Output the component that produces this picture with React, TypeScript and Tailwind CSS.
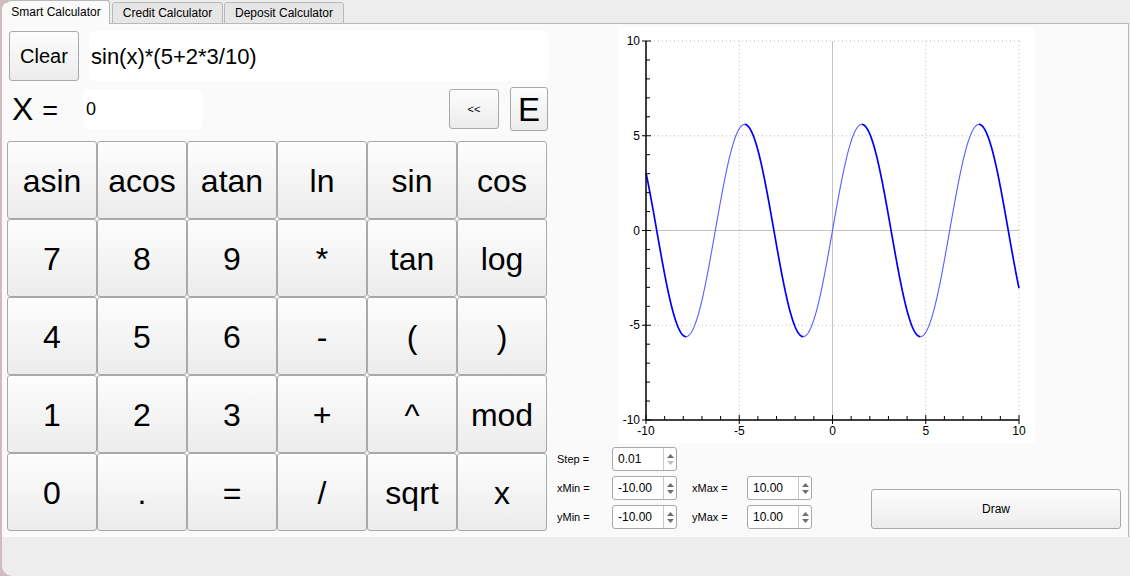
import React from "react";

const FONT = { fontFamily: '"Liberation Sans", Arial, sans-serif' };

const rows = [
  ["asin", "acos", "atan", "ln", "sin", "cos"],
  ["7", "8", "9", "*", "tan", "log"],
  ["4", "5", "6", "-", "(", ")"],
  ["1", "2", "3", "+", "^", "mod"],
  ["0", ".", "=", "/", "sqrt", "x"],
];

function Spin({ value, disabledDown }: { value: string; disabledDown?: boolean }) {
  return (
    <div className="flex h-[24px] w-[65px] rounded-[3px] border border-[#a8a8a8] bg-white">
      <div className="flex flex-1 items-center pl-[5px] text-[12px] text-black">{value}</div>
      <div className="flex w-[13px] flex-col items-center justify-center gap-[3px] border-l border-[#c8c8c8]">
        <svg width="7" height="4" viewBox="0 0 7 4">
          <polygon points="0,4 3.5,0 7,4" fill="#6e6e6e" />
        </svg>
        <svg width="7" height="4" viewBox="0 0 7 4">
          <polygon points="0,0 3.5,4 7,0" fill={disabledDown ? "#bdbdbd" : "#6e6e6e"} />
        </svg>
      </div>
    </div>
  );
}

function Plot() {
  const W = 417;
  const H = 416;
  const L = 28;
  const R = 401;
  const T = 14;
  const B = 393;
  const px = (x: number) => L + ((x + 10) * (R - L)) / 20;
  const py = (y: number) => T + ((10 - y) * (B - T)) / 20;
  const pts: [number, number][] = [];
  for (let i = 0; i <= 2000; i++) {
    const x = -10 + (i * 20) / 2000;
    pts.push([x, 5.6 * Math.sin(x)]);
  }
  const down: string[] = [];
  const up: string[] = [];
  let cur: string[] = [];
  let curDown: boolean | null = null;
  for (let i = 1; i < pts.length; i++) {
    const d = pts[i][1] < pts[i - 1][1];
    if (curDown === null || d !== curDown) {
      if (cur.length) (curDown ? down : up).push(cur.join(" "));
      cur = [`${px(pts[i - 1][0]).toFixed(2)},${py(pts[i - 1][1]).toFixed(2)}`];
      curDown = d;
    }
    cur.push(`${px(pts[i][0]).toFixed(2)},${py(pts[i][1]).toFixed(2)}`);
  }
  if (cur.length) (curDown ? down : up).push(cur.join(" "));

  const minor: number[] = [];
  for (let v = -10; v <= 10; v++) if (v % 5 !== 0) minor.push(v);
  const major = [-10, -5, 0, 5, 10];

  return (
    <svg width={W} height={H} viewBox={`0 0 ${W} ${H}`} className="block bg-white">
      {[-5, 5, 10].map((v) => (
        <line key={"gx" + v} x1={px(v)} y1={T} x2={px(v)} y2={B} stroke="#bdbdbd" strokeWidth="1" strokeDasharray="1 3" />
      ))}
      {[-5, 5, 10].map((v) => (
        <line key={"gy" + v} x1={L} y1={py(v)} x2={R} y2={py(v)} stroke="#bdbdbd" strokeWidth="1" strokeDasharray="1 3" />
      ))}
      <line x1={px(0)} y1={T} x2={px(0)} y2={B} stroke="#c4c4c4" strokeWidth="1" />
      <line x1={L} y1={py(0)} x2={R} y2={py(0)} stroke="#c4c4c4" strokeWidth="1" />
      {up.map((p, i) => (
        <polyline key={"u" + i} points={p} fill="none" stroke="#5c5cff" strokeWidth="1.1" />
      ))}
      {down.map((p, i) => (
        <polyline key={"d" + i} points={p} fill="none" stroke="#0000ff" strokeWidth="1.7" />
      ))}
      <line x1={L} y1={T} x2={L} y2={B + 0.5} stroke="#000" strokeWidth="1.5" />
      <line x1={L} y1={B} x2={R} y2={B} stroke="#000" strokeWidth="1.5" />
      {minor.map((v) => (
        <g key={"m" + v}>
          <line x1={L} y1={py(v)} x2={L + 4} y2={py(v)} stroke="#000" strokeWidth="1" />
          <line x1={px(v)} y1={B} x2={px(v)} y2={B - 4} stroke="#000" strokeWidth="1" />
        </g>
      ))}
      {major.map((v) => (
        <g key={"M" + v}>
          <line x1={L - 4} y1={py(v)} x2={L + 5} y2={py(v)} stroke="#000" strokeWidth="1" />
          <line x1={px(v)} y1={B + 4} x2={px(v)} y2={B - 5} stroke="#000" strokeWidth="1" />
          <text x={L - 6} y={py(v) + 4} textAnchor="end" fontSize="12" fill="#000" style={FONT}>
            {v}
          </text>
          <text x={px(v)} y={B + 15} textAnchor="middle" fontSize="12" fill="#000" style={FONT}>
            {v}
          </text>
        </g>
      ))}
    </svg>
  );
}

const btn =
  "rounded-[3px] border border-[#a9a9a9] bg-gradient-to-b from-[#fdfdfd] to-[#ececec] text-black";

export default function App() {
  return (
    <div className="h-[576px] w-[1130px] overflow-hidden bg-[#cfbcbe]" style={FONT}>
      <div className="ml-[2px] flex h-full flex-col rounded-l-[10px] bg-[#ededed]">
        {/* tabs */}
        <div className="relative z-10 flex h-[24px] items-end text-[12px]">
          <div className="flex h-[24px] w-[108px] items-center justify-center rounded-t-[3px] rounded-tl-[10px] border-x border-t border-[#b8b8b8] border-l-transparent bg-[#fafafa] pb-[2px]">
            Smart Calculator
          </div>
          <div className="ml-[2px] flex h-[22px] w-[111px] items-center justify-center rounded-t-[3px] border border-[#b8b8b8] bg-[#e6e6e6]">
            Credit Calculator
          </div>
          <div className="ml-[1px] flex h-[22px] w-[120px] items-center justify-center rounded-t-[3px] border border-[#b8b8b8] bg-[#e6e6e6]">
            Deposit Calculator
          </div>
        </div>
        {/* pane */}
        <div className="-mt-[1px] flex h-[514px] w-[1127px] border-r border-t border-[#b8b8b8] bg-[#fafafa]">
          {/* left */}
          <div className="flex w-[549px] flex-col pl-[5px] pt-[7px]">
            <div className="flex h-[50px] gap-[10px] pl-[2px]">
              <button className={`${btn} h-[50px] w-[70px] text-[20px]`}>Clear</button>
              <div className="flex h-[50px] w-[460px] items-center rounded-[6px] bg-white pl-[2px] text-[22px] text-black">
                sin(x)*(5+2*3/10)
              </div>
            </div>
            <div className="mt-[6px] flex h-[44px] items-center">
              <div className="ml-[5px] flex w-[71px] items-baseline text-black">
                <span className="text-[32px] leading-none">X</span>
                <span className="ml-[9px] text-[27px] leading-none">=</span>
              </div>
              <div className="flex h-[40px] w-[120px] items-center rounded-[6px] bg-white pl-[3px] text-[18px] text-black">
                0
              </div>
              <button className={`${btn} ml-[246px] h-[40px] w-[50px] text-[11px]`}>&lt;&lt;</button>
              <button className={`${btn} ml-[11px] h-[44px] w-[38px] text-[33px] leading-none`}>E</button>
            </div>
            <div className="mt-[10px] grid grid-cols-[repeat(6,90px)] grid-rows-[repeat(5,78px)]">
              {rows.flat().map((k, i) => (
                <button key={i} className={`${btn} pt-[2px] text-[32px]`}>
                  {k}
                </button>
              ))}
            </div>
          </div>
          {/* right */}
          <div className="ml-[6px] flex flex-col">
            <div className="ml-[61px] mt-[3px]">
              <Plot />
            </div>
            <div className="mt-[4px] flex items-end">
              <div className="flex flex-col gap-[5px] text-[11px] text-black">
                <div className="flex items-center">
                  <span className="w-[55px]">Step =</span>
                  <Spin value="0.01" disabledDown />
                </div>
                <div className="flex items-center">
                  <span className="w-[55px]">xMin =</span>
                  <Spin value="-10.00" />
                  <span className="ml-[15px] w-[55px]">xMax =</span>
                  <Spin value="10.00" />
                </div>
                <div className="flex items-center">
                  <span className="w-[55px]">yMin =</span>
                  <Spin value="-10.00" />
                  <span className="ml-[15px] w-[55px]">yMax =</span>
                  <Spin value="10.00" />
                </div>
              </div>
              <button className={`${btn} ml-[59px] h-[40px] w-[250px] text-[12px]`}>Draw</button>
            </div>
          </div>
        </div>
      </div>
    </div>
  );
}
